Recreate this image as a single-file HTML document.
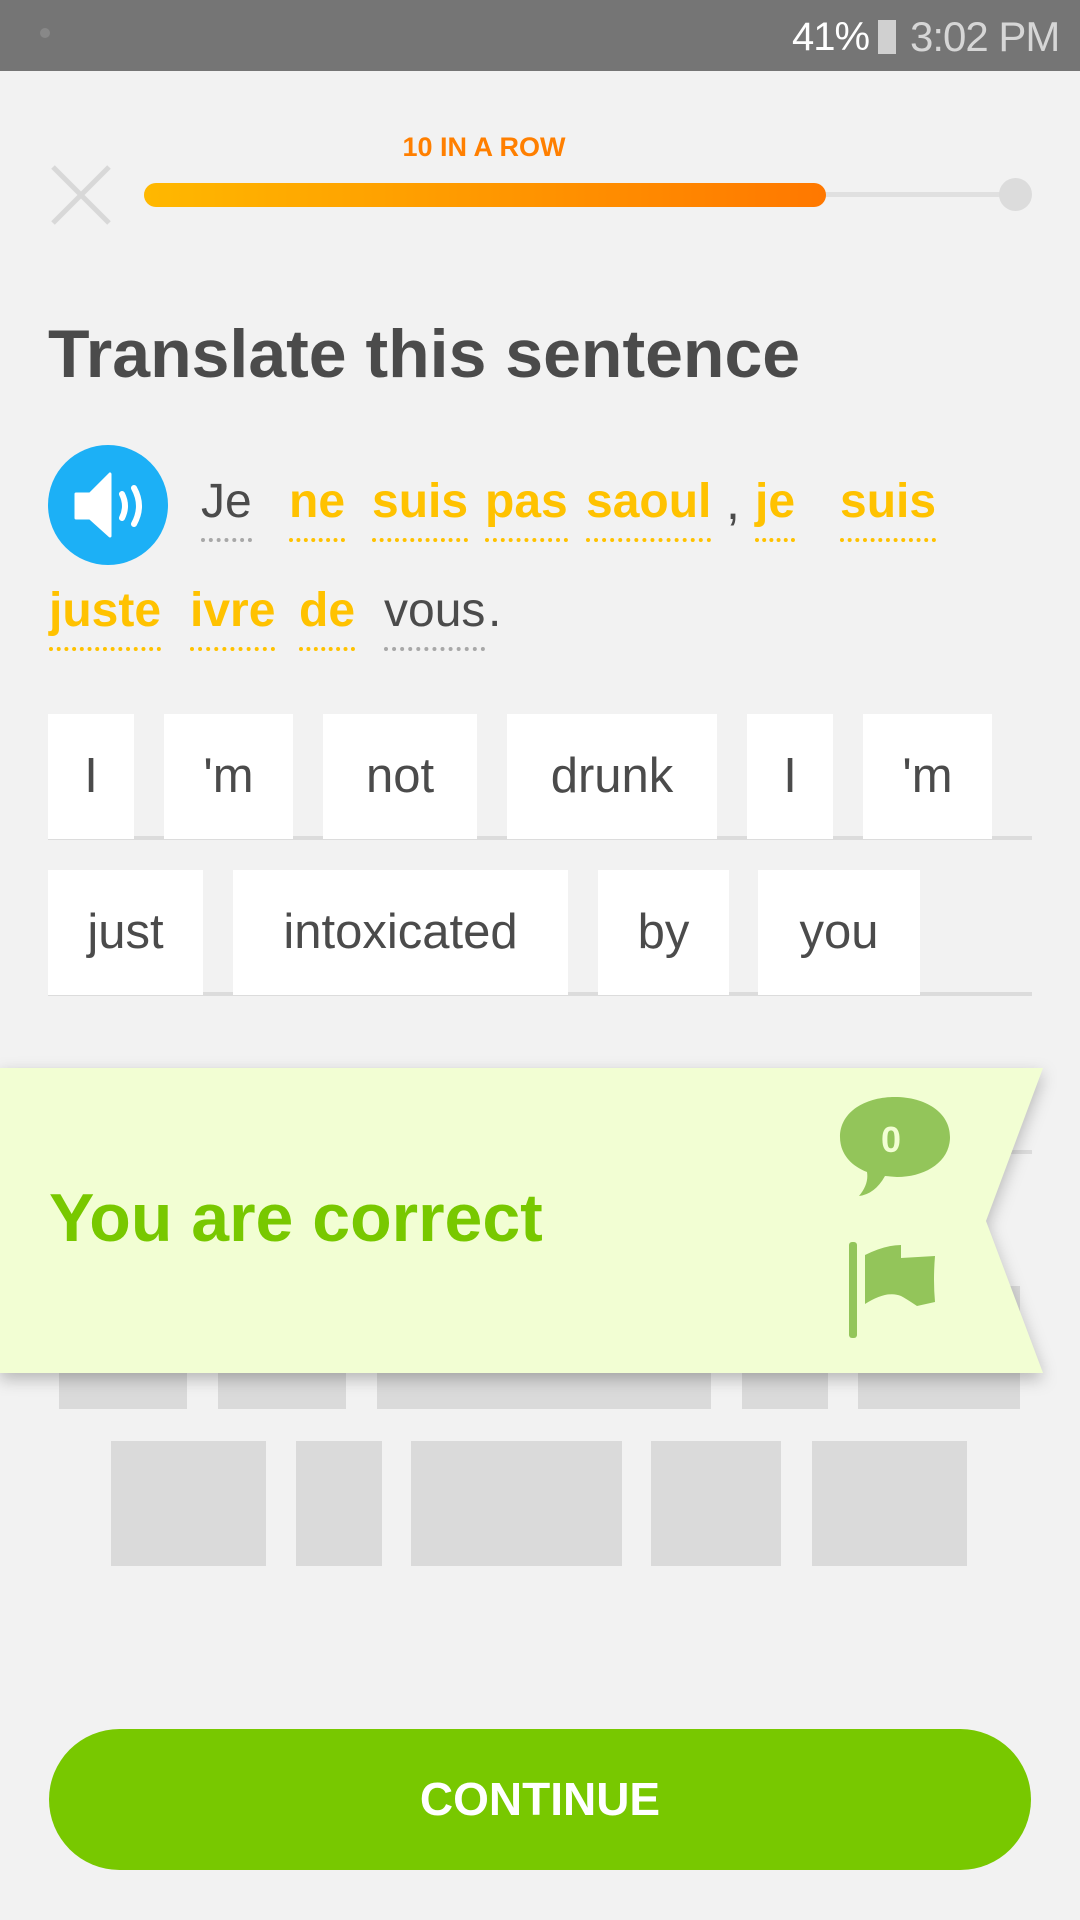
<!DOCTYPE html>
<html><head><meta charset="utf-8"><style>
*{margin:0;padding:0;box-sizing:border-box}
body{width:1080px;height:1920px;background:#f2f2f2;position:relative;overflow:hidden;font-family:"Liberation Sans",sans-serif}
.a{position:absolute}
.tile{position:absolute;background:#fff;color:#4b4b4b;font-size:49px;text-align:center;line-height:125px;height:125px}
.g{position:absolute;background:#dadada}
.w{position:absolute;font-size:48px;line-height:60px;padding-bottom:6px;border-bottom:4px dotted #ffc200;color:#ffc200;font-weight:bold;white-space:nowrap}
.w.n{color:#4b4b4b;font-weight:normal;border-bottom-color:#a8a8a8}
</style></head><body>
<div class="a" style="left:0;top:0;width:1080px;height:71px;background:#757575"></div>
<div class="a" style="left:40px;top:28px;width:10px;height:10px;border-radius:50%;background:#888"></div>
<div class="a" style="left:792px;top:12px;color:#fff;font-size:40px;line-height:50px;letter-spacing:-1px">41%</div>
<div class="a" style="left:878px;top:20px;width:18px;height:34px;background:#d0d0d0"></div>
<div class="a" style="left:910px;top:12px;color:#d6d6d6;font-size:42px;line-height:50px;letter-spacing:-1px">3:02 PM</div>

<svg class="a" style="left:48px;top:162px" width="66" height="66"><path d="M5 5L61 61M61 5L5 61" stroke="#d8d8d8" stroke-width="5"/></svg>
<div class="a" style="left:384px;top:132px;width:200px;text-align:center;color:#ff7f00;font-weight:bold;font-size:27px">10 IN A ROW</div>
<div class="a" style="left:144px;top:192px;width:872px;height:5px;background:#e0e0e0"></div>
<div class="a" style="left:999px;top:178px;width:33px;height:33px;border-radius:50%;background:#dcdcdc"></div>
<div class="a" style="left:144px;top:183px;width:682px;height:24px;border-radius:12px;background:linear-gradient(90deg,#ffb800,#ff7800)"></div>

<div class="a" style="left:48px;top:314px;font-size:68px;font-weight:bold;color:#4b4b4b;line-height:80px">Translate this sentence</div>

<div class="a" style="left:48px;top:445px;width:120px;height:120px;border-radius:50%;background:#1cb0f6"></div>
<svg class="a" style="left:72px;top:470px" width="76" height="72"><path d="M4 24h14l20-20v62l-20-18H4z" fill="#fff" stroke="#fff" stroke-width="3" stroke-linejoin="round"/><path d="M50 24q6 12 0 24" stroke="#fff" stroke-width="6" fill="none" stroke-linecap="round"/><path d="M62 18q10 18 0 36" stroke="#fff" stroke-width="6" fill="none" stroke-linecap="round"/></svg>

<div class="w n" style="left:201px;top:472px">Je</div>
<div class="w" style="left:289px;top:472px">ne</div>
<div class="w" style="left:372px;top:472px">suis</div>
<div class="w" style="left:485px;top:472px">pas</div>
<div class="w" style="left:586px;top:472px">saoul</div>
<div class="a" style="left:726px;top:472px;font-size:50px;line-height:60px;color:#4b4b4b">,</div>
<div class="w" style="left:755px;top:472px">je</div>
<div class="w" style="left:840px;top:472px">suis</div>
<div class="w" style="left:49px;top:581px">juste</div>
<div class="w" style="left:190px;top:581px">ivre</div>
<div class="w" style="left:299px;top:581px">de</div>
<div class="w n" style="left:384px;top:581px">vous</div>
<div class="a" style="left:488px;top:581px;font-size:48px;line-height:60px;color:#4b4b4b">.</div>

<div class="a" style="left:48px;top:836px;width:984px;height:4px;background:#dcdcdc"></div>
<div class="tile" style="left:48px;top:714px;width:86px">I</div>
<div class="tile" style="left:164px;top:714px;width:129px">'m</div>
<div class="tile" style="left:323px;top:714px;width:154px">not</div>
<div class="tile" style="left:507px;top:714px;width:210px">drunk</div>
<div class="tile" style="left:747px;top:714px;width:86px">I</div>
<div class="tile" style="left:863px;top:714px;width:129px">'m</div>
<div class="a" style="left:48px;top:992px;width:984px;height:4px;background:#dcdcdc"></div>
<div class="tile" style="left:48px;top:870px;width:155px">just</div>
<div class="tile" style="left:233px;top:870px;width:335px">intoxicated</div>
<div class="tile" style="left:598px;top:870px;width:131px">by</div>
<div class="tile" style="left:758px;top:870px;width:162px">you</div>
<div class="a" style="left:48px;top:1150px;width:984px;height:4px;background:#dcdcdc"></div>

<div class="g" style="left:59px;top:1286px;width:128px;height:123px"></div>
<div class="g" style="left:218px;top:1286px;width:128px;height:123px"></div>
<div class="g" style="left:377px;top:1286px;width:334px;height:123px"></div>
<div class="g" style="left:742px;top:1286px;width:86px;height:123px"></div>
<div class="g" style="left:858px;top:1286px;width:162px;height:123px"></div>
<div class="g" style="left:111px;top:1441px;width:155px;height:125px"></div>
<div class="g" style="left:296px;top:1441px;width:86px;height:125px"></div>
<div class="g" style="left:411px;top:1441px;width:211px;height:125px"></div>
<div class="g" style="left:651px;top:1441px;width:130px;height:125px"></div>
<div class="g" style="left:812px;top:1441px;width:155px;height:125px"></div>

<svg class="a" style="left:0;top:1060px;filter:drop-shadow(0 6px 8px rgba(0,0,0,.25))" width="1080" height="330"><polygon points="0,8 1043,8 986,161 1043,313 0,313" fill="#f2fed3"/></svg>
<div class="a" style="left:49px;top:1178px;font-size:68px;font-weight:bold;color:#78c800;line-height:80px">You are correct</div>
<svg class="a" style="left:835px;top:1090px" width="120" height="110"><path d="M60 7C90 7 115 22 115 47C115 72 90 87 62 87L50 86Q40 104 24 106Q34 94 32 82C14 75 5 62 5 47C5 22 30 7 60 7Z" fill="#93c55a"/><text x="56" y="62" font-family="Liberation Sans" font-weight="bold" font-size="36" fill="#f2fed3" text-anchor="middle">0</text></svg>
<svg class="a" style="left:845px;top:1240px" width="95" height="100"><rect x="4" y="2" width="8" height="96" rx="3" fill="#93c55a"/><path d="M20 15Q40 5 56 5L56 18L90 16Q88 40 90 62L72 66Q60 58 56 56Q42 50 20 64Z" fill="#93c55a"/></svg>

<div class="a" style="left:49px;top:1729px;width:982px;height:141px;border-radius:71px;background:#78c800;color:#fff;font-weight:bold;font-size:46px;text-align:center;line-height:141px">CONTINUE</div>
</body></html>
